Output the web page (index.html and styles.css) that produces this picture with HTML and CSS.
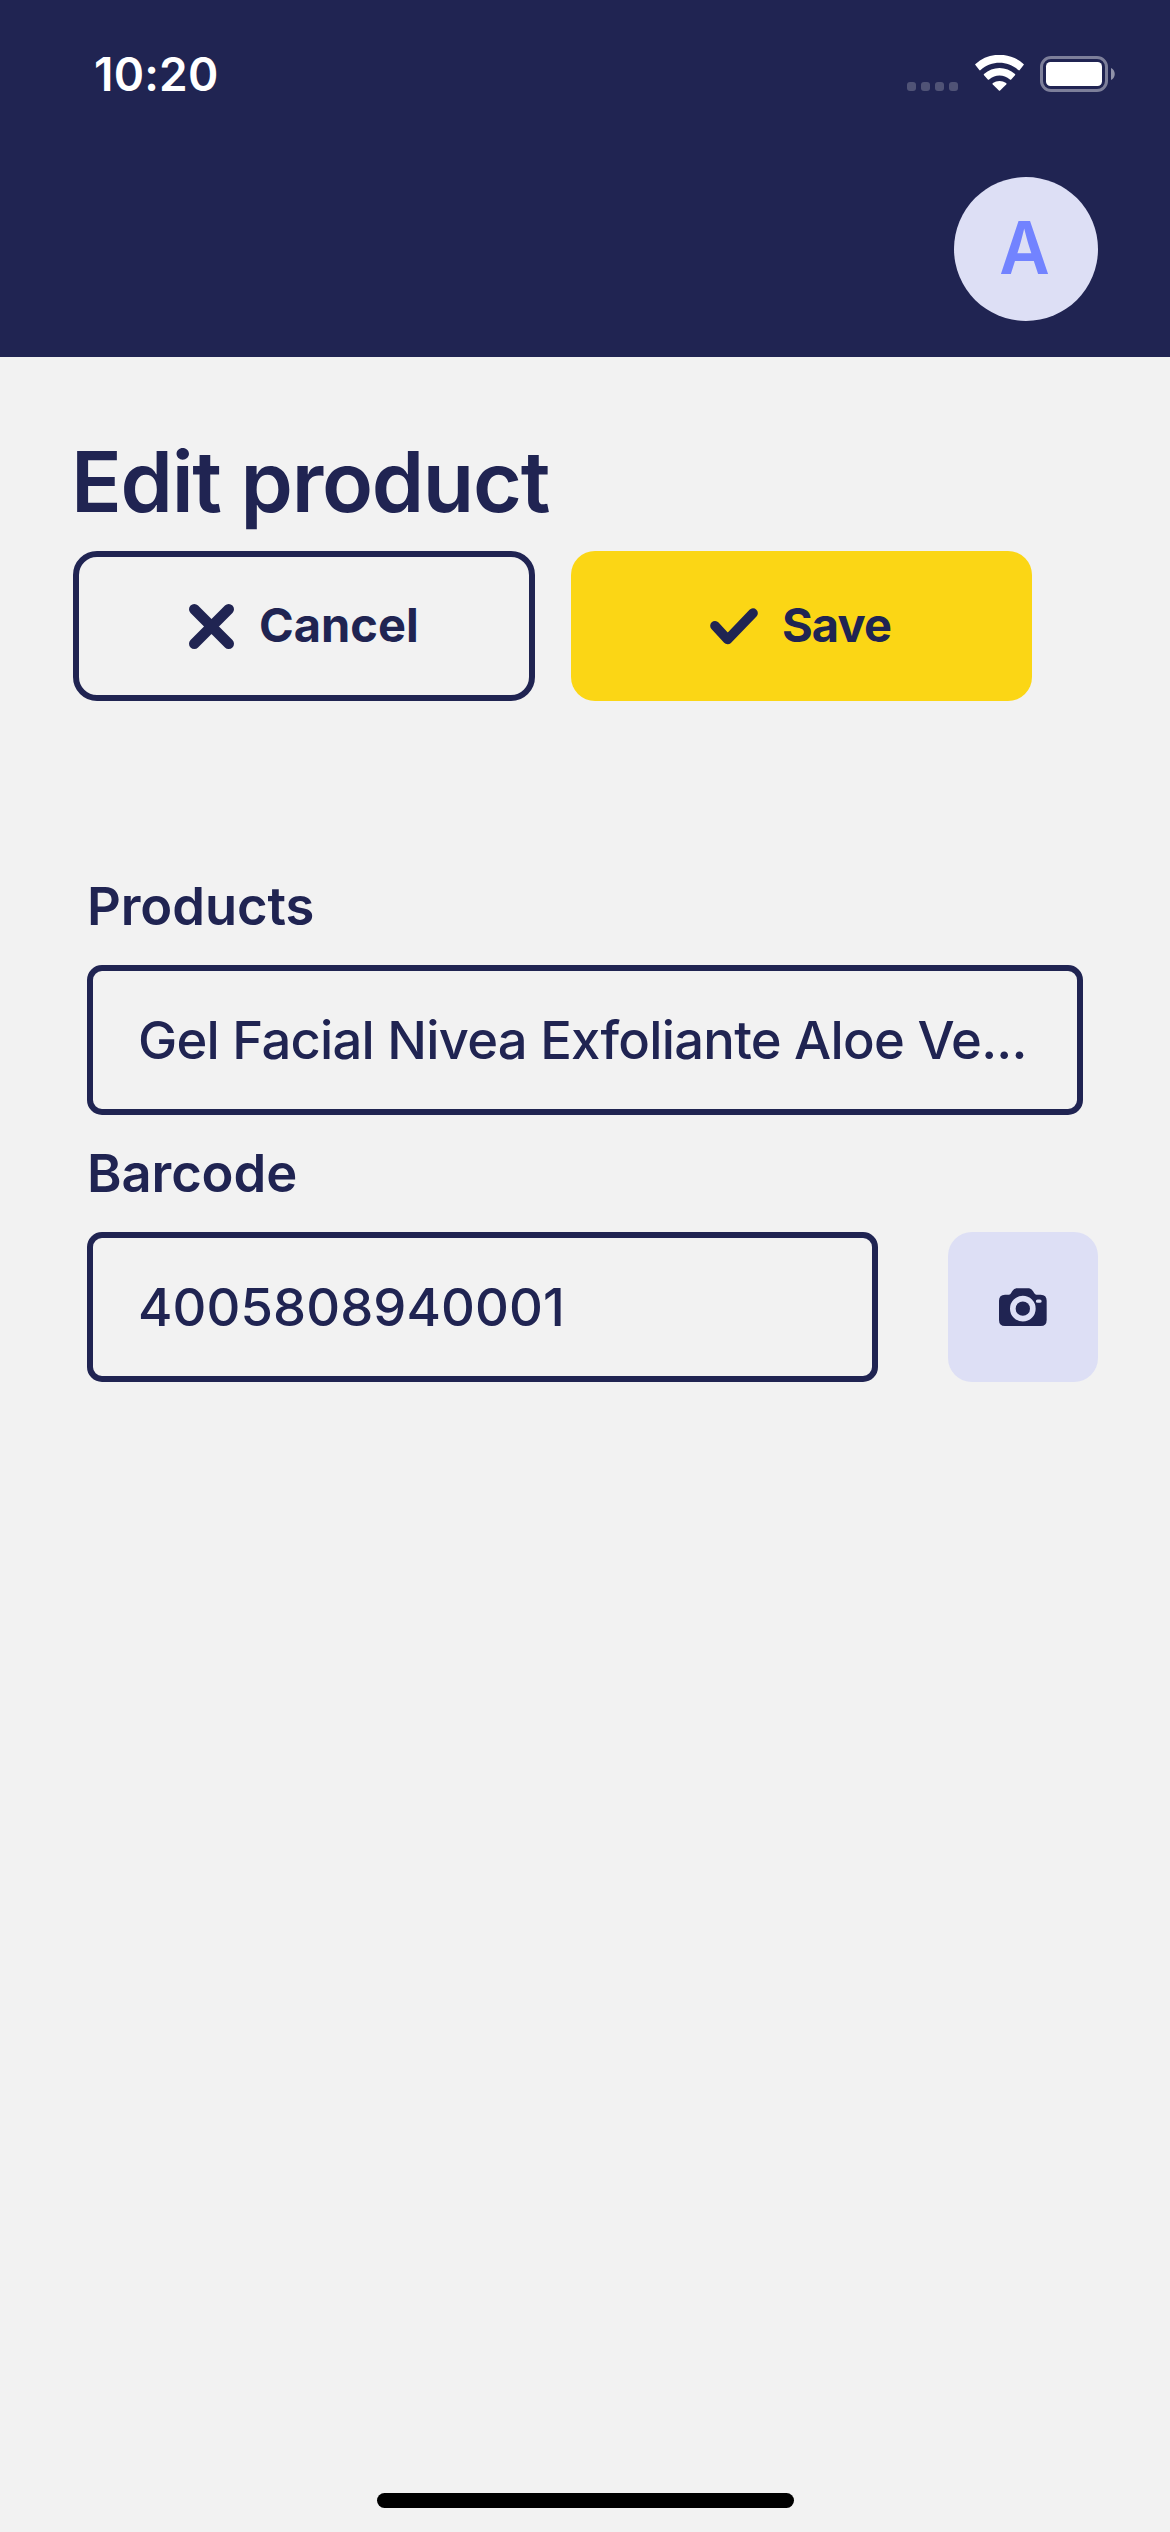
FILE: index.html
```html
<!DOCTYPE html>
<html lang="en">
<head>
<meta charset="utf-8">
<title>Edit product</title>
<link rel="stylesheet" href="styles.css">
</head>
<body>
<header class="header">
  <div class="status">
    <span class="time">10:20</span>
    <div class="indicators">
      <div class="signal"><i></i><i></i><i></i><i></i></div>
      <svg class="wifi" viewBox="0 0 49 36" fill="#fff">
        <path d="M.4 10.1Q-.2 9.5.5 8.9C14-3.3 35-3.3 48.500 8.900Q49.200 9.500 48.600 10.100L44.700 15.100Q44.100 15.800 43.400 15.100C32.500 5.400 16.500 5.400 5.600 15.100Q4.900 15.800 4.300 15.100Z"/>
        <path d="M9 20.300Q8.400 19.700 9 19.100C17.800 10.900 31.200 10.900 40 19.100Q40.600 19.700 40 20.300L36.200 24.500Q35.600 25.100 34.900 24.500C28.700 19.100 20.300 19.100 14.100 24.500Q13.400 25.100 12.800 24.500Z"/>
        <path d="M17.800 29.400Q17.200 28.700 17.900 28.100C21.800 25.200 27.200 25.200 31.100 28.100Q31.800 28.700 31.200 29.400L25.100 35.500Q24.500 36.100 23.900 35.500Z"/>
      </svg>
      <svg class="battery" viewBox="0 0 75 36">
        <rect x="1.500" y="1.500" width="65" height="33" rx="9.500" fill="none" stroke="#fff" stroke-opacity=".42" stroke-width="3"/>
        <rect x="6" y="6" width="56" height="24" rx="4.500" fill="#fff"/>
        <path d="M71 12C76 14 76 22 71 24Z" fill="#fff" fill-opacity=".5"/>
      </svg>
    </div>
  </div>
  <div class="account">
    <div class="avatar"><span class="initial">A</span></div>
  </div>
</header>
<main class="content">
  <h1 class="title">Edit product</h1>
  <div class="actions">
    <button class="btn btn-cancel">
      <svg class="icon-x" viewBox="417 552 136 136" fill="none" stroke="currentColor" stroke-width="32" stroke-linecap="round"><path d="M433 568 537 672M537 568 433 672"/></svg>
      <span>Cancel</span>
    </button>
    <button class="btn btn-save">
      <svg class="icon-check" viewBox="479 264 144 111" fill="none" stroke="currentColor" stroke-width="29" stroke-linecap="round" stroke-linejoin="round"><path d="M494 317.500 532 358.500 608 279.500"/></svg>
      <span>Save</span>
    </button>
  </div>
  <form class="form">
    <label class="label">Products</label>
    <div class="input">Gel Facial Nivea Exfoliante Aloe Ve...</div>
    <label class="label">Barcode</label>
    <div class="row">
      <div class="input input-barcode">4005808940001</div>
      <button class="camera" type="button" aria-label="Scan">
        <svg class="icon-camera" viewBox="444 232 150 120" fill="currentColor">
          <path fill-rule="evenodd" d="M465 255H477Q481 255 483 251C488 242 492 235.500 502 235.500H534C544 235.500 548 242 553 251Q555 255 559 255H572Q590 255 590 273V331Q590 349 572 349H465Q447 349 447 331V273Q447 255 465 255ZM518.500 258.500A38.500 38.500 0 1 0 518.500 335.500A38.500 38.500 0 1 0 518.500 258.500ZM563 269.500Q557.500 269.500 557.500 274.500T563 279.500H569.500Q575 279.500 575 274.500T569.500 269.500Z"/>
          <circle cx="518.500" cy="297" r="21.500"/>
        </svg>
      </button>
    </div>
  </form>
</main>
<div class="home-bar"></div>
</body>
</html>
```
FILE: styles.css
```css
* { box-sizing: border-box; }

body {
  margin: 0;
  width: 1170px;
  height: 2532px;
  display: flex;
  flex-direction: column;
  background: #f2f2f2;
  color: #202452;
  font-family: Inter, "Liberation Sans", sans-serif;
}

button {
  margin: 0;
  padding: 0;
  border: 0;
  color: inherit;
  font: inherit;
}

svg { display: block; flex: none; }

.header {
  height: 357px;
  background: #202452;
  color: #fff;
}

.status {
  height: 177px;
  padding: 44px 55px 0 94px;
  display: flex;
  justify-content: space-between;
}

.time {
  font-size: 46px;
  font-weight: 600;
  line-height: 61px;
  letter-spacing: 0.2px;
}

.indicators {
  height: 60px;
  display: flex;
  align-items: center;
}

.signal {
  display: flex;
  gap: 5px;
  margin: 25px 17px 0 0;
}

.signal i {
  width: 9px;
  height: 9px;
  border-radius: 3px;
  background: #505376;
}

.wifi { width: 49px; height: 36px; margin: -2px 16px 0 0; }
.battery { width: 75px; height: 36px; }

.account {
  padding-right: 72px;
  display: flex;
  justify-content: flex-end;
}

.avatar {
  width: 144px;
  height: 144px;
  border-radius: 50%;
  background: #dddff5;
  color: #7283ff;
  display: flex;
  align-items: center;
  justify-content: center;
}

.initial {
  margin: -2px 0 0 -3px;
  font-size: 73px;
  font-weight: 600;
  line-height: 142px;
  transform: scaleX(0.95);
}

.content {
  flex: 1;
  padding: 75px 72px 0 73px;
}

.title {
  margin: 0 0 19px -2px;
  font-size: 84px;
  font-weight: 600;
  line-height: 100px;
  letter-spacing: -1.3px;
}

.actions {
  display: flex;
  gap: 36px;
}

.btn {
  width: 462px;
  height: 150px;
  border-radius: 24px;
  display: flex;
  align-items: center;
  font-size: 47px;
  font-weight: 700;
  line-height: 60px;
}

.btn span { margin-top: -2px; }

.btn-cancel {
  padding-left: 110px;
  border: 6px solid #202452;
  background: transparent;
  gap: 25px;
}

.btn-save {
  width: 461px;
  padding-left: 139px;
  background: #fbd615;
  gap: 24px;
  letter-spacing: -0.9px;
}

.icon-x { width: 45px; height: 45px; margin-top: 1px; }
.icon-check { width: 48px; height: 37px; margin-top: 1px; }

.form {
  padding: 175px 0 0 14px;
}

.label {
  display: block;
  margin-bottom: 29px;
  font-size: 52.5px;
  font-weight: 600;
  line-height: 60px;
  letter-spacing: -0.1px;
}

.input {
  width: 996px;
  height: 150px;
  margin-bottom: 28px;
  padding-left: 45px;
  border: 6px solid #202452;
  border-radius: 15px;
  font-size: 52.5px;
  font-weight: 500;
  line-height: 138px;
  letter-spacing: -0.74px;
  white-space: nowrap;
}

.row {
  display: flex;
  justify-content: space-between;
}

.input-barcode { width: 791px; letter-spacing: 0.1px; }

.camera {
  width: 150px;
  height: 150px;
  border-radius: 24px;
  background: #dddff5;
  display: flex;
  align-items: center;
  justify-content: center;
}

.icon-camera { width: 50px; height: 40px; }

.home-bar {
  width: 417px;
  height: 15px;
  margin: 0 auto 24px;
  border-radius: 8px;
  background: #000;
}
```
